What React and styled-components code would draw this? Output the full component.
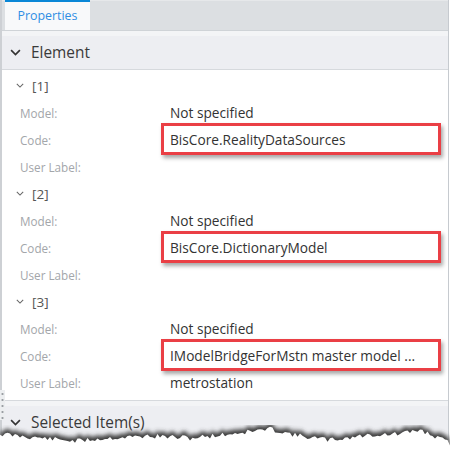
import React from "react";
import styled, { createGlobalStyle } from "styled-components";

const GlobalStyle = createGlobalStyle`
  body {
    margin: 0;
    background: #ffffff;
    font-family: "Open Sans", "Liberation Sans", sans-serif;
  }
`;

const groups = [
  { id: "[1]", model: "Not specified", code: "BisCore.RealityDataSources", label: "" },
  { id: "[2]", model: "Not specified", code: "BisCore.DictionaryModel", label: "" },
  { id: "[3]", model: "Not specified", code: "IModelBridgeForMstn master model ...", label: "metrostation" },
];

// deterministic jagged edge for the torn paper bottom
const tearPoints = (() => {
  const base = [
    [0, 6], [30, 9], [75, 13], [110, 10], [150, 8], [190, 10], [230, 6],
    [270, 1], [300, 8], [330, 12], [370, 7], [400, 6], [420, 2], [450, 15],
  ];
  const pts = [];
  let seed = 11;
  const rnd = () => {
    seed = (seed * 9301 + 49297) % 233280;
    return seed / 233280;
  };
  for (let x = 0; x <= 450; x += 2.5) {
    let i = 0;
    while (i < base.length - 2 && base[i + 1][0] < x) i++;
    const [x0, y0] = base[i];
    const [x1, y1] = base[i + 1];
    const t = Math.min(1, Math.max(0, (x - x0) / (x1 - x0)));
    const y = y0 + (y1 - y0) * t + (rnd() - 0.5) * 5;
    pts.push(`${x},${y.toFixed(1)}`);
  }
  return pts.join(" ");
})();

const Chevron = ({ size = 10, color = "#444", weight = 1.3 }) => (
  <svg width={size} height={size * 0.6} viewBox="0 0 10 6" fill="none">
    <path d="M1 1 L5 5 L9 1" stroke={color} strokeWidth={weight} />
  </svg>
);

const App = () => {
  return (
    <>
      <GlobalStyle />
      <Frame>
        <Panel>
          <TabBar>
            <Tab>Properties</Tab>
          </TabBar>
          <Strip />
          <SectionHeader>
            <Chevron size={11} color="#333" weight={1.5} />
            <span>Element</span>
          </SectionHeader>
          <Content>
            {groups.map((g) => (
              <React.Fragment key={g.id}>
                <GroupRow>
                  <Chevron size={8} color="#666" />
                  <span>{g.id}</span>
                </GroupRow>
                <PropRow>
                  <Label>Model:</Label>
                  <Value>{g.model}</Value>
                </PropRow>
                <PropRow $marked>
                  <Label>Code:</Label>
                  <Value>{g.code}</Value>
                </PropRow>
                <PropRow>
                  <Label>User Label:</Label>
                  <Value>{g.label}</Value>
                </PropRow>
              </React.Fragment>
            ))}
          </Content>
          <Strip />
          <SectionHeader>
            <Chevron size={11} color="#333" weight={1.5} />
            <span>Selected Item(s)</span>
          </SectionHeader>
        </Panel>
        <Grip />
        <Tear width="450" height="26" viewBox="0 0 450 26">
          <defs>
            <filter id="tearShadow" x="-5%" y="-80%" width="110%" height="260%">
              <feGaussianBlur stdDeviation="2" />
            </filter>
          </defs>
          <polygon
            points={`0,26 ${tearPoints} 450,26`}
            fill="#3c3c3c"
            transform="translate(0,-1)"
            filter="url(#tearShadow)"
          />
          <polygon points={`0,26 ${tearPoints} 450,26`} fill="#ffffff" transform="translate(0,3)" />
        </Tear>
      </Frame>
    </>
  );
};

export default App;

const Frame = styled.div`
  position: relative;
  width: 450px;
  height: 451px;
  overflow: hidden;
  background: #ffffff;
`;

const Panel = styled.div`
  width: 449px;
  box-sizing: border-box;
  border-left: 2px solid #cdd0d4;
  border-right: 1px solid #c6cacf;
  background: #ffffff;
`;

const TabBar = styled.div`
  height: 31px;
  background: #dcdfe2;
  border-top: 1px solid #e6e8ea;
  box-sizing: border-box;
  display: flex;
  align-items: flex-end;
  padding-left: 3px;
  border-bottom: 1px solid #cfd3d7;
`;

const Tab = styled.div`
  width: 85px;
  height: 30px;
  box-sizing: border-box;
  background: #f8f9fa;
  border-top: 2px solid #0a87d6;
  color: #2f8ee4;
  font-size: 12.4px;
  display: flex;
  align-items: center;
  justify-content: center;
  padding-bottom: 1px;
`;

const Strip = styled.div`
  height: 5px;
  background: #f3f4f6;
`;

const SectionHeader = styled.div`
  height: 34px;
  box-sizing: border-box;
  background: #edeef2;
  border-bottom: 1px solid #d6d9dd;
  display: flex;
  align-items: center;
  gap: 10px;
  padding-left: 8px;
  color: #3a3a3a;
  font-size: 15.4px;
`;

const Content = styled.div`
  padding: 2px 0 4px;
  border-bottom: 1px solid #d6d9dd;
`;

const GroupRow = styled.div`
  height: 27px;
  display: flex;
  align-items: center;
  gap: 8px;
  padding-left: 14px;
  color: #555;
  font-size: 13.5px;
`;

const PropRow = styled.div`
  position: relative;
  height: 27px;
  display: grid;
  grid-template-columns: 150px 1fr;
  align-items: center;
  padding-left: 18px;

  ${(p) =>
    p.$marked &&
    `
    &::after {
      content: "";
      position: absolute;
      left: 159px;
      top: -3px;
      width: 280px;
      height: 32px;
      box-sizing: border-box;
      border: 3px solid #ea3f45;
      box-shadow: 2px 3px 4px rgba(0, 0, 0, 0.35);
      pointer-events: none;
    }
  `}
`;

const Label = styled.span`
  color: #a3a6aa;
  font-size: 11.7px;
`;

const Value = styled.span`
  color: #333;
  font-size: 13.7px;
  white-space: nowrap;
`;

const Grip = styled.div`
  position: absolute;
  left: 0;
  top: 390px;
  width: 5px;
  height: 30px;
  background: #eceef0 radial-gradient(circle, #9a9ea3 1px, transparent 1.2px) 0 1px / 5px 6px repeat-y;
`;

const Tear = styled.svg`
  position: absolute;
  left: 0;
  bottom: 0;
  display: block;
`;
